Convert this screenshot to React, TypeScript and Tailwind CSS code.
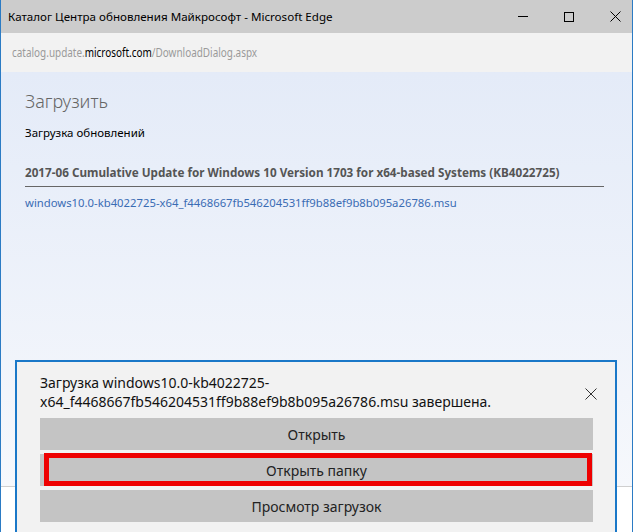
const font = { fontFamily: '"Segoe UI", "Noto Sans", "Liberation Sans", sans-serif' };

function WindowControls() {
  return (
    <div className="flex items-center h-full">
      <div className="w-[46px] flex justify-center">
        <div className="w-[10px] h-px bg-black" />
      </div>
      <div className="w-[46px] flex justify-center">
        <div className="w-[10px] h-[10px] border border-black" />
      </div>
      <div className="w-[46px] flex justify-center">
        <svg width="11" height="11" viewBox="0 0 11 11">
          <path d="M0.5 0.5 L10.5 10.5 M10.5 0.5 L0.5 10.5" stroke="#000" strokeWidth="1" />
        </svg>
      </div>
    </div>
  );
}

export default function App() {
  const buttons = ['Открыть', 'Открыть папку', 'Просмотр загрузок'];

  return (
    <div
      className="relative w-[633px] h-[532px] overflow-hidden flex flex-col border-x-[1.5px] border-[#2b7bc4] bg-white"
      style={font}
    >
      {/* Title bar */}
      <div className="h-[33px] bg-[#cccccc] flex items-center justify-between pl-[7px] shrink-0">
        <span className="text-[11.6px] text-black">Каталог Центра обновления Майкрософт - Microsoft Edge</span>
        <div className="h-full -mr-[6px]">
          <WindowControls />
        </div>
      </div>

      {/* Address */}
      <div className="h-[39px] bg-[#f2f2f2] flex items-center pl-[11px] shrink-0">
        <span className="text-[13px] text-[#9a9a9a] origin-left scale-x-[0.765] whitespace-nowrap">
          catalog.update.<span className="text-black">microsoft.com</span>/DownloadDialog.aspx
        </span>
      </div>

      {/* Page content */}
      <div className="h-[414px] shrink-0 bg-gradient-to-b from-[#e4ebf8] to-[#f6f8fc] px-[24px] pt-[17px]">
        <h1 className="text-[18px] font-light text-[#666] leading-[24px]">Загрузить</h1>
        <p className="mt-[12px] text-[11.5px] text-black leading-[16px]">Загрузка обновлений</p>
        <div className="mt-[22px] pr-[2px] w-[581px]">
          <p className="text-[11.7px] font-bold text-[#555] leading-[18px]">
            2017-06 Cumulative Update for Windows 10 Version 1703 for x64-based Systems (KB4022725)
          </p>
          <div className="mt-[5px] h-px bg-[#666]" />
          <p className="mt-[8px] text-[11.3px] text-[#3a6cb4] leading-[16px]">
            windows10.0-kb4022725-x64_f4468667fb546204531ff9b88ef9b8b095a26786.msu
          </p>
        </div>
      </div>

      {/* Footer */}
      <div className="flex-1 border-t border-[#cfcfcf] bg-white" />

      {/* Download notification */}
      <div className="absolute left-[14px] top-[360px] w-[602px] h-[174px] border-2 border-[#1a78c8] bg-[#f2f2f2] pl-[23px] pr-[22px] pt-[11px]">
        <div className="flex items-start justify-between">
          <p className="text-[14px] leading-[19px] text-[#111]">
            Загрузка windows10.0-kb4022725-
            <br />
            x64_f4468667fb546204531ff9b88ef9b8b095a26786.msu завершена.
          </p>
          <svg className="mt-[15px] mr-[-4px]" width="12" height="12" viewBox="0 0 12 12">
            <path d="M0.5 0.5 L11.5 11.5 M11.5 0.5 L0.5 11.5" stroke="#333" strokeWidth="1" />
          </svg>
        </div>
        <div className="mt-[7px] flex flex-col gap-[4px]">
          {buttons.map((label, i) => (
            <div key={label} className="relative h-[32px] bg-[#c4c4c4] flex items-center justify-center">
              <span className="text-[14px] text-[#222]">{label}</span>
              {i === 1 && (
                <div className="absolute left-[4px] right-[1px] top-[-1px] bottom-0 border-[5px] border-[#ee0000]" />
              )}
            </div>
          ))}
        </div>
      </div>
    </div>
  );
}
